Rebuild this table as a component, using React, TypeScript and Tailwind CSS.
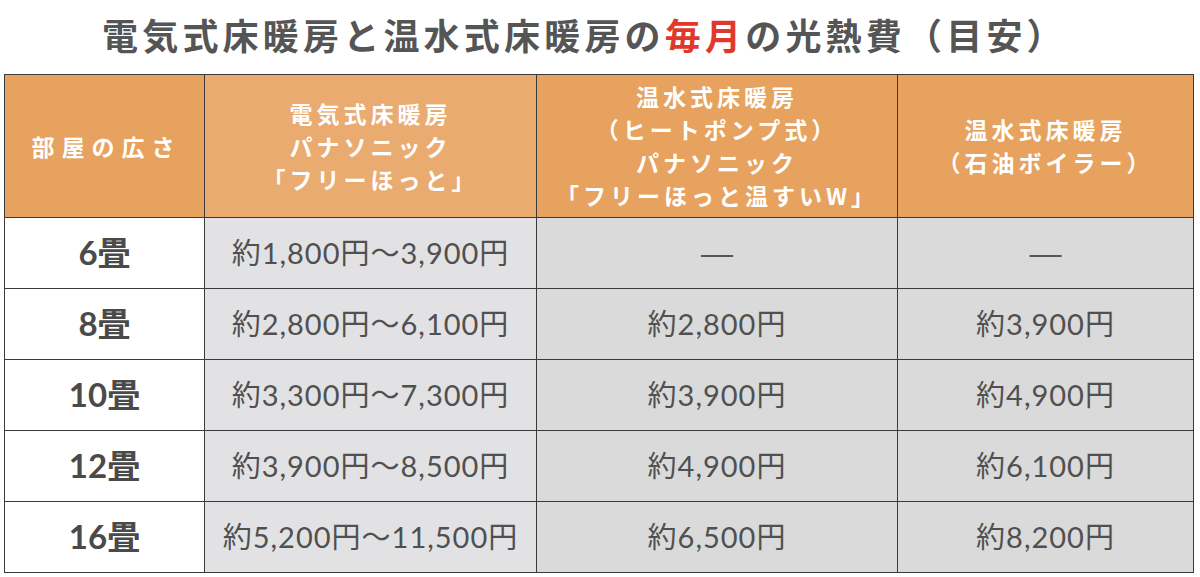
const jp = '"Noto Sans CJK JP", "Noto Sans", sans-serif';
const num = 'Lato, "Noto Sans CJK JP", sans-serif';

type Row = { size: string; electric: string; heatPump: string; boiler: string };

const rows: Row[] = [
  { size: '6畳', electric: '約1,800円～3,900円', heatPump: '—', boiler: '—' },
  { size: '8畳', electric: '約2,800円～6,100円', heatPump: '約2,800円', boiler: '約3,900円' },
  { size: '10畳', electric: '約3,300円～7,300円', heatPump: '約3,900円', boiler: '約4,900円' },
  { size: '12畳', electric: '約3,900円～8,500円', heatPump: '約4,900円', boiler: '約6,100円' },
  { size: '16畳', electric: '約5,200円～11,500円', heatPump: '約6,500円', boiler: '約8,200円' },
];

function Cost({ value }: { value: string }) {
  if (value === '—') {
    return <span className="text-[32px] leading-none text-[#555]" style={{ fontFamily: '"Liberation Sans", sans-serif' }}>—</span>;
  }
  return (
    <span className="text-[29px] tracking-[1px] text-[#505050]" style={{ fontFamily: num }}>
      {value}
    </span>
  );
}

export default function App() {
  return (
    <div className="h-[577px] w-[1200px] overflow-hidden bg-white" style={{ fontFamily: jp }}>
      <h1 className="flex h-[74px] items-center pb-[7px] pl-[102px] text-[36px] font-bold tracking-[4.2px] text-[#555]">
        電気式床暖房と温水式床暖房の<span className="text-[#e1382c]">毎月</span>の光熱費（目安）
      </h1>
      <table className="ml-[4px] w-[1189px] table-fixed border-collapse border border-[#8a8a8a]">
        <colgroup>
          <col className="w-[200px]" />
          <col className="w-[332px]" />
          <col className="w-[361px]" />
          <col className="w-[296px]" />
        </colgroup>
        <thead>
          <tr className="h-[143px] text-[23px] font-semibold leading-[33px] text-white">
            <th className="border border-[#3a3a3a] bg-[#e6a25e] pl-[4px] tracking-[7px]">部屋の広さ</th>
            <th className="border border-[#3a3a3a] bg-[#e9ab70] tracking-[4px]">
              電気式床暖房
              <br />
              パナソニック
              <br />
              「フリーほっと」
            </th>
            <th className="border border-[#3a3a3a] bg-[#e6a25e] tracking-[4px]">
              温水式床暖房
              <br />
              （ヒートポンプ式）
              <br />
              パナソニック
              <br />
              「フリーほっと温すいW」
            </th>
            <th className="border border-[#3a3a3a] bg-[#e6a25e] tracking-[4px]">
              温水式床暖房
              <br />
              （石油ボイラー）
            </th>
          </tr>
        </thead>
        <tbody>
          {rows.map((row) => (
            <tr key={row.size} className="h-[71px] text-center">
              <td className="border border-[#3a3a3a] bg-white text-[33px] font-bold text-[#4a4a4a]" style={{ fontFamily: num }}>
                {row.size}
              </td>
              <td className="border border-[#3a3a3a] bg-[#e2e2e4]">
                <Cost value={row.electric} />
              </td>
              <td className="border border-[#3a3a3a] bg-[#dadada]">
                <Cost value={row.heatPump} />
              </td>
              <td className="border border-[#3a3a3a] bg-[#dadada]">
                <Cost value={row.boiler} />
              </td>
            </tr>
          ))}
        </tbody>
      </table>
    </div>
  );
}
